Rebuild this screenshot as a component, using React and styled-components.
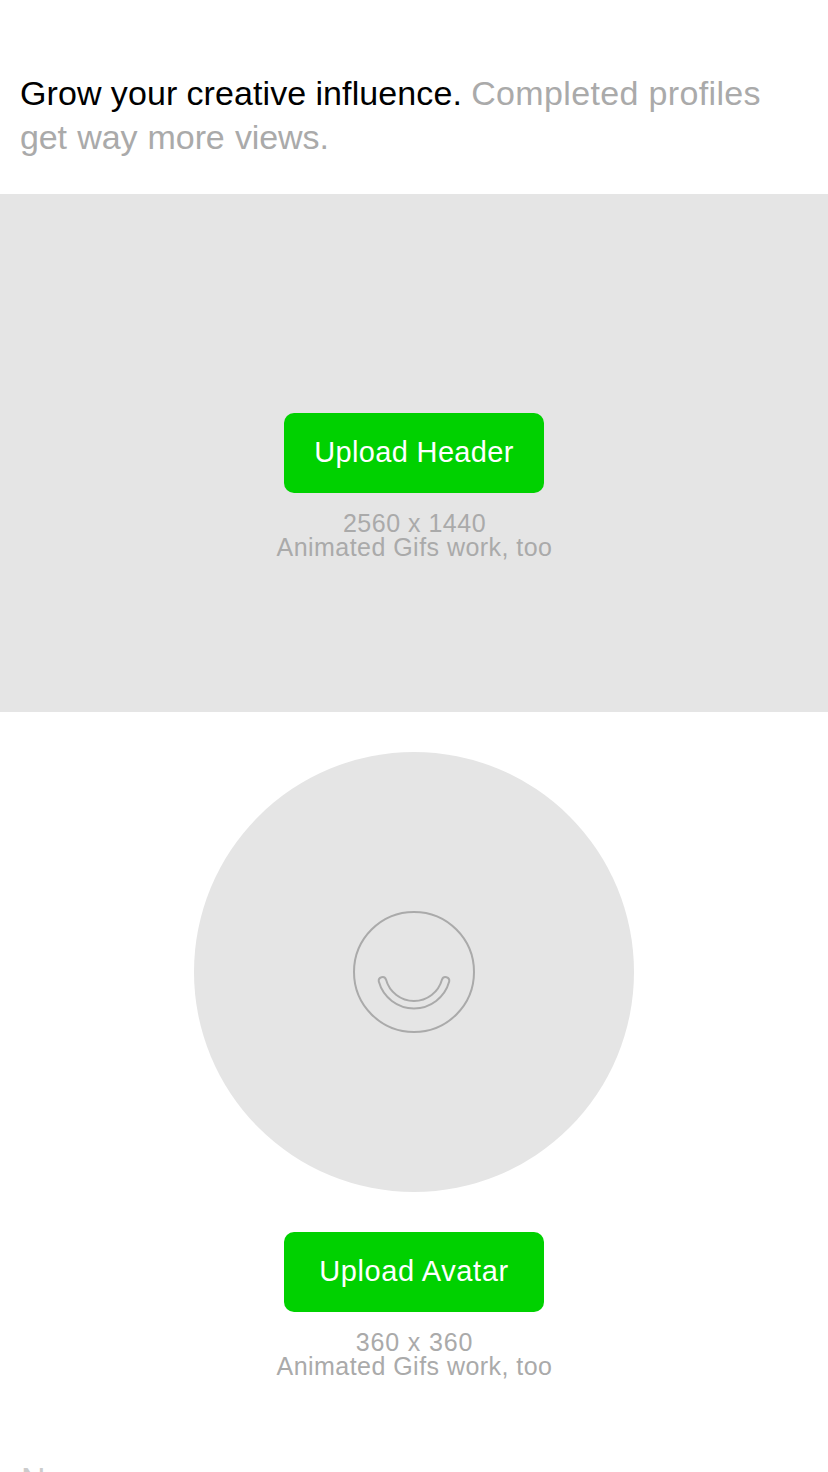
import React from "react";
import styled, { createGlobalStyle } from "styled-components";

const GlobalStyle = createGlobalStyle`
  * { box-sizing: border-box; }
  html, body { margin: 0; padding: 0; }
  body {
    background: #fff;
    font-family: "Liberation Sans", Arial, sans-serif;
    color: #000;
    overflow: hidden;
  }
`;

const Page = styled.main`
  display: flex;
  flex-direction: column;
  width: 100%;
  height: 1472px;
  overflow: hidden;

  > * { flex-shrink: 0; }
`;

const Intro = styled.h1`
  height: 194px;
  margin: 0;
  padding: 71px 20px 0;
  font-size: 34px;
  font-weight: 400;
  line-height: 44px;
`;

const Phrase = styled.span`
  color: ${({ $muted }) => ($muted ? "#aaa" : "#000")};
  letter-spacing: ${({ $spacing }) => $spacing}px;
  word-spacing: ${({ $words = 0 }) => $words}px;
`;

const HeaderPanel = styled.section`
  display: flex;
  flex-direction: column;
  align-items: center;
  height: 518px;
  padding-top: 219px;
  background: #e5e5e5;
`;

const AvatarSection = styled.section`
  display: flex;
  flex-direction: column;
  align-items: center;
  padding-top: 40px;
`;

const Avatar = styled.div`
  display: flex;
  align-items: center;
  justify-content: center;
  width: 440px;
  height: 440px;
  margin-bottom: 40px;
  border-radius: 50%;
  background: #e5e5e5;
`;

const UploadButton = styled.button`
  width: 260px;
  height: 80px;
  padding: 0 0 2px;
  border: 0;
  border-radius: 10px;
  background: #00d100;
  color: #fff;
  font: 400 29px/40px "Liberation Sans", Arial, sans-serif;
  letter-spacing: ${({ $spacing }) => $spacing}px;
  white-space: nowrap;
`;

const Hint = styled.div`
  margin-top: 18px;
  color: #aaa;
  font-size: 25px;
  line-height: 24px;
  text-align: center;
`;

const HintLine = styled.div`
  padding-left: 1px;
  letter-spacing: ${({ $spacing }) => $spacing}px;
`;

const NameField = styled.label`
  margin-top: 79px;
  padding-left: 21px;
  color: #ccc;
  font-size: 34px;
  line-height: 44px;
`;

const Smile = () => (
  <svg width="124" height="124" viewBox="-62 -62 124 124" fill="none" stroke="#aaa" strokeWidth="2" aria-hidden="true">
    <circle r="60" />
    <path d="M-35.2 9.6A36.5 36.5 0 0 0 35.2 9.6A3.75 3.75 0 0 0 28 7.6A29 29 0 0 1 -28 7.6A3.75 3.75 0 0 0 -35.2 9.6Z" />
  </svg>
);

export default function App() {
  return (
    <>
      <GlobalStyle />
      <Page>
        <Intro>
          <Phrase $spacing={0.1} $words={-0.4}>Grow your creative influence. </Phrase>
          <Phrase $muted $spacing={0.35}>Completed profiles </Phrase>
          <br />
          <Phrase $muted $spacing={-0.1} $words={0.9}>get way more views.</Phrase>
        </Intro>
        <HeaderPanel>
          <UploadButton $spacing={0.35}>Upload Header</UploadButton>
          <Hint>
            <HintLine $spacing={0.5}>2560 x 1440</HintLine>
            <HintLine $spacing={0.46}>Animated Gifs work, too</HintLine>
          </Hint>
        </HeaderPanel>
        <AvatarSection>
          <Avatar><Smile /></Avatar>
          <UploadButton $spacing={0.6}>Upload Avatar</UploadButton>
          <Hint>
            <HintLine $spacing={0.85}>360 x 360</HintLine>
            <HintLine $spacing={0.46}>Animated Gifs work, too</HintLine>
          </Hint>
        </AvatarSection>
        <NameField>Name</NameField>
      </Page>
    </>
  );
}
